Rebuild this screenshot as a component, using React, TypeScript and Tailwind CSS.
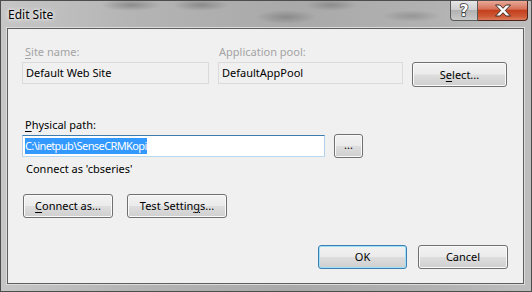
import React from "react";

const font = { fontFamily: '"Noto Sans", "Segoe UI", sans-serif' };

function Btn({
  children,
  className,
  primary,
}: {
  children: React.ReactNode;
  className: string;
  primary?: boolean;
}) {
  return (
    <div
      className={
        (primary
          ? "border-[#3c7fb1] shadow-[inset_0_0_0_1px_#9fe0f8] "
          : "border-[#707070] shadow-[inset_0_0_0_1px_#fafafa] ") +
        "flex shrink-0 items-center justify-center rounded-[3px] border bg-[linear-gradient(#f2f2f2_0%,#ebebeb_48%,#dddddd_52%,#cfcfcf_100%)] text-[11px] leading-[16px] text-black " +
        className
      }
    >
      {children}
    </div>
  );
}

export default function App() {
  return (
    <div
      style={font}
      className="flex h-[292px] w-[532px] flex-col overflow-hidden border border-[#4d4d4d] bg-[radial-gradient(ellipse_30px_6px_at_130px_4px,#8c8c8c,transparent),radial-gradient(ellipse_28px_6px_at_200px_4px,#8a8a8a,transparent),radial-gradient(ellipse_30px_7px_at_285px_16px,#8a8a8a,transparent),radial-gradient(ellipse_26px_6px_at_330px_4px,#8c8c8c,transparent),radial-gradient(ellipse_30px_6px_at_410px_15px,#969696,transparent),linear-gradient(90deg,#c6c6c6_0%,#b4b4b4_25%,#a9a9a9_55%,#b1b1b1_80%,#bdbdbd_100%)]"
    >
      {/* title bar */}
      <div className="flex h-[27px] shrink-0 items-start">
        <div className="ml-[7px] mt-[7px] text-[12px] leading-[14px] text-black [text-shadow:0_0_6px_#ffffff,0_0_3px_#ffffff]">
          Edit Site
        </div>
        <div className="ml-auto flex h-[20px] items-stretch">
          <div className="flex w-[28px] items-center justify-center rounded-bl-[4px] border border-t-0 border-[#5a5a5a] bg-[linear-gradient(#e6e6e6_0%,#cfcfcf_45%,#b2b2b2_50%,#c9c9c9_100%)]">
            <svg width="14" height="16" viewBox="0 0 14 16">
              <text
                x="7"
                y="13"
                textAnchor="middle"
                fontSize="15"
                fontWeight="bold"
                fontFamily="'DejaVu Sans', sans-serif"
                fill="#ffffff"
                stroke="#3a3a3a"
                strokeWidth="1.6"
                paintOrder="stroke"
                strokeLinejoin="round"
              >
                ?
              </text>
            </svg>
          </div>
          <div className="mr-[3px] flex w-[50px] items-center justify-center rounded-br-[4px] border border-l-0 border-t-0 border-[#4a241a] bg-[linear-gradient(#e9a898_0%,#d6725a_42%,#c4401e_50%,#cf5835_80%,#dc7c5c_100%)]">
            <svg width="18" height="13" viewBox="0 0 18 13">
              <path
                d="M1.5 1h4.3L9 4.3 12.2 1h4.3L11.3 6.5 16.5 12h-4.3L9 8.7 5.8 12H1.5L6.7 6.5Z"
                fill="#ffffff"
                stroke="#3b2a26"
                strokeWidth="1"
                strokeLinejoin="round"
              />
            </svg>
          </div>
        </div>
      </div>

      {/* body row */}
      <div className="flex min-h-0 flex-1">
        <div className="w-[6px] shrink-0" />
        <div className="flex flex-1 flex-col border border-[#5e5e5e] bg-[#f0f0f0] pl-[14px] pr-[15px] pt-[15px] shadow-[0_0_0_1px_#dcdcdc]">
          {/* row 1 */}
          <div className="flex items-start">
            <div className="flex w-[187px] flex-col">
              <div className="ml-[3px] mb-[2px] text-[11px] leading-[16px] text-[#a3a3a3]">
                <span className="underline underline-offset-2">S</span>ite name:
              </div>
              <div className="flex h-[22px] items-center border border-[#dadada] bg-[#f0f0f0] px-[3px] text-[11px] leading-[16px] text-black">
                Default Web Site
              </div>
            </div>
            <div className="ml-[9px] flex w-[185px] flex-col">
              <div className="ml-[1px] mb-[2px] text-[11px] leading-[16px] text-[#a3a3a3]">
                Application pool:
              </div>
              <div className="flex h-[22px] items-center border border-[#dadada] bg-[#f0f0f0] px-[3px] text-[11px] leading-[16px] text-black">
                DefaultAppPool
              </div>
            </div>
            <Btn className="ml-[9px] mt-[18px] h-[25px] w-[95px]">
              <span>
                S<span className="underline underline-offset-2">e</span>lect...
              </span>
            </Btn>
          </div>

          {/* physical path */}
          <div className="ml-[3px] mt-[30px] mb-[1px] text-[11px] leading-[16px] text-black">
            <span className="underline underline-offset-2">P</span>hysical path:
          </div>
          <div className="flex h-[24px] items-center">
            <div className="flex h-[22px] w-[303px] items-center border border-[#abadb3] border-t-[#3d7bad] border-l-[#b5cfe7] border-r-[#b5cfe7] border-b-[#b7d9ed] bg-white px-[2px]">
              <span className="bg-[#3399ff] text-[11px] leading-[16px] tracking-[-0.6px] text-white">
                C:\inetpub\SenseCRMKopi
              </span>
            </div>
            <Btn className="ml-[9px] h-[24px] w-[29px]">
              <span className="text-[11px] leading-[12px] -mt-[2px]">...</span>
            </Btn>
          </div>

          <div className="ml-[4px] mt-[3px] text-[11px] leading-[16px] text-black">
            Connect as 'cbseries'
          </div>

          <div className="mt-[17px] flex">
            <Btn className="ml-[1px] h-[24px] w-[90px]">
              <span>
                <span className="underline underline-offset-2">C</span>onnect as...
              </span>
            </Btn>
            <Btn className="ml-[14px] h-[24px] w-[100px]">
              <span>
                Test Settin<span className="underline underline-offset-2">g</span>s...
              </span>
            </Btn>
          </div>

          <div className="mt-[27px] flex justify-end">
            <Btn primary className="h-[24px] w-[89px]">
              OK
            </Btn>
            <Btn className="ml-[11px] h-[24px] w-[90px]">Cancel</Btn>
          </div>
        </div>
        <div className="w-[7px] shrink-0" />
      </div>

      {/* bottom frame */}
      <div className="h-[7px] shrink-0" />
    </div>
  );
}
